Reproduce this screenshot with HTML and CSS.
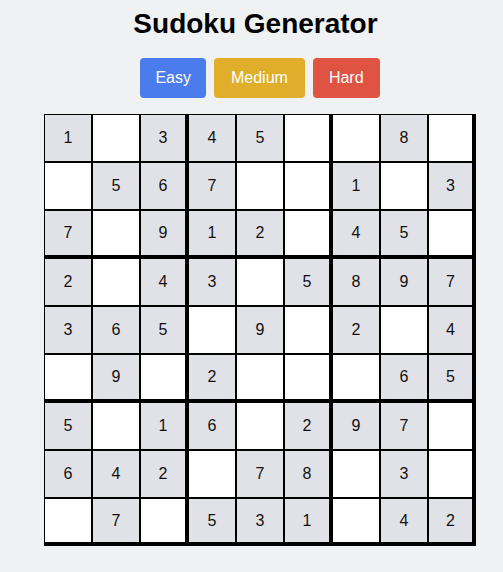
FILE: index.html
```html
<!DOCTYPE html>
<html>
<head>
<meta charset="utf-8">
<link rel="stylesheet" href="styles.css">
</head>
<body>
<div class="page">
  <h1 class="title">Sudoku Generator</h1>
  <div class="controls">
    <button class="btn easy">Easy</button>
    <button class="btn medium">Medium</button>
    <button class="btn hard">Hard</button>
  </div>
  <div class="board">
    <div class="cell f">1</div><div class="cell"></div><div class="cell f">3</div><div class="cell f">4</div><div class="cell f">5</div><div class="cell"></div><div class="cell"></div><div class="cell f">8</div><div class="cell"></div>
    <div class="cell"></div><div class="cell f">5</div><div class="cell f">6</div><div class="cell f">7</div><div class="cell"></div><div class="cell"></div><div class="cell f">1</div><div class="cell"></div><div class="cell f">3</div>
    <div class="cell f">7</div><div class="cell"></div><div class="cell f">9</div><div class="cell f">1</div><div class="cell f">2</div><div class="cell"></div><div class="cell f">4</div><div class="cell f">5</div><div class="cell"></div>
    <div class="cell f">2</div><div class="cell"></div><div class="cell f">4</div><div class="cell f">3</div><div class="cell"></div><div class="cell f">5</div><div class="cell f">8</div><div class="cell f">9</div><div class="cell f">7</div>
    <div class="cell f">3</div><div class="cell f">6</div><div class="cell f">5</div><div class="cell"></div><div class="cell f">9</div><div class="cell"></div><div class="cell f">2</div><div class="cell"></div><div class="cell f">4</div>
    <div class="cell"></div><div class="cell f">9</div><div class="cell"></div><div class="cell f">2</div><div class="cell"></div><div class="cell"></div><div class="cell"></div><div class="cell f">6</div><div class="cell f">5</div>
    <div class="cell f">5</div><div class="cell"></div><div class="cell f">1</div><div class="cell f">6</div><div class="cell"></div><div class="cell f">2</div><div class="cell f">9</div><div class="cell f">7</div><div class="cell"></div>
    <div class="cell f">6</div><div class="cell f">4</div><div class="cell f">2</div><div class="cell"></div><div class="cell f">7</div><div class="cell f">8</div><div class="cell"></div><div class="cell f">3</div><div class="cell"></div>
    <div class="cell"></div><div class="cell f">7</div><div class="cell"></div><div class="cell f">5</div><div class="cell f">3</div><div class="cell f">1</div><div class="cell"></div><div class="cell f">4</div><div class="cell f">2</div>
  </div>
</div>
</body>
</html>
```
FILE: styles.css
```css
html, body {
  margin: 0;
  padding: 0;
  background: #f0f1f3;
  font-family: "Liberation Sans", Arial, sans-serif;
}
.page {
  width: 432px;
  margin-left: 44px;
  padding-top: 8px;
  display: flex;
  flex-direction: column;
  align-items: center;
}
.title {
  margin: 0 9px 0 0;
  font-size: 28px;
  line-height: 32px;
  font-weight: bold;
  color: #000;
  white-space: nowrap;
}
.controls {
  margin-top: 18px;
  display: flex;
  gap: 8px;
}
.btn {
  font-family: "Liberation Sans", Arial, sans-serif;
  font-size: 16px;
  line-height: 24px;
  height: 40px;
  padding: 8px 16px;
  border: none;
  border-radius: 4px;
  color: #fff;
}
.easy { background: #4a7cee; padding: 8px 15px; }
.medium { background: #e0ae2b; padding: 8px 17px; }
.hard { background: #df5343; }
.board {
  margin-top: 16px;
  width: 432px;
  display: grid;
  grid-template-columns: repeat(9, 48px);
  grid-auto-rows: 48px;
}
.cell {
  box-sizing: border-box;
  border: 1px solid #000;
  background: #fff;
  display: flex;
  align-items: center;
  justify-content: center;
  font-size: 16px;
  color: #111;
}
.cell.f { background: #e1e2e7; }
.cell:nth-child(3n) { border-right-width: 3px; }
.cell:nth-child(9n) { border-right-width: 4px; }
.cell:nth-child(n+19):nth-child(-n+27),
.cell:nth-child(n+46):nth-child(-n+54) { border-bottom-width: 3px; }
.cell:nth-child(n+73) { border-bottom-width: 4px; }
```
